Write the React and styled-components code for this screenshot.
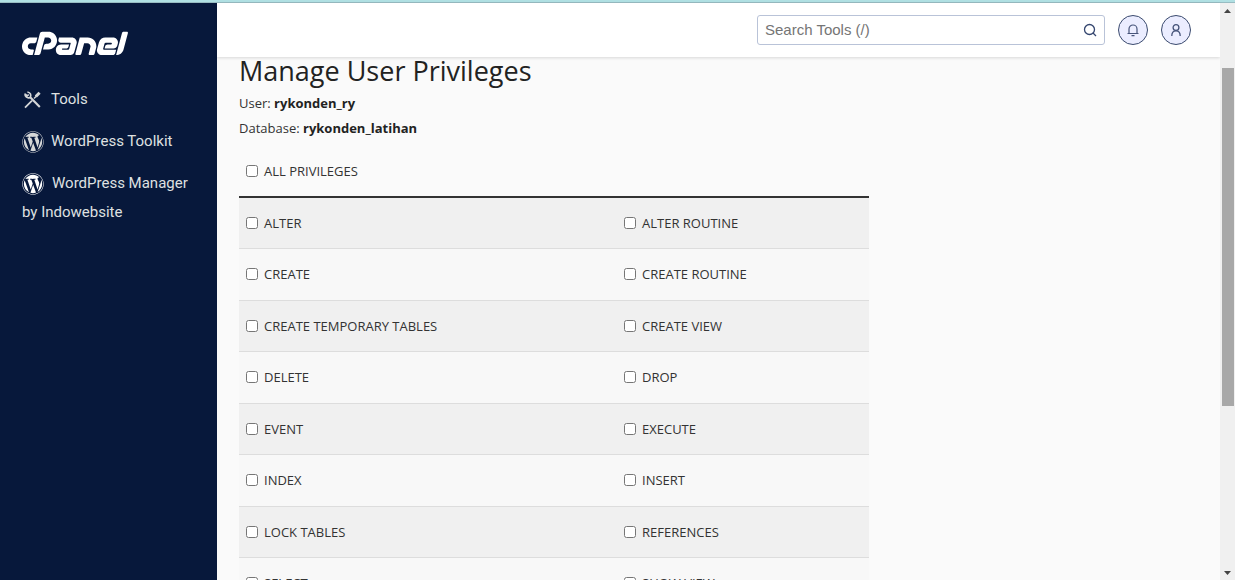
import React from 'react';
import styled, { createGlobalStyle } from 'styled-components';
import { FaCpanel, FaWordpress } from 'react-icons/fa';

const GlobalStyle = createGlobalStyle`
  *, *::before, *::after { box-sizing: border-box; }
  body {
    margin: 0;
    background: #fafafa;
    color: #333;
    font: 13px/20px "Open Sans", "Liberation Sans", sans-serif;
  }
`;

const Page = styled.div`
  display: flex;
  flex-direction: column;
  height: 100vh;
  overflow: hidden;
`;

const TopStrip = styled.div`
  flex: none;
  height: 3px;
  background: #b0e0e3;
  border-bottom: 1px solid #98bcc2;
`;

const Shell = styled.div`
  flex: 1;
  display: flex;
  min-height: 0;
`;

const Sidebar = styled.aside`
  flex: none;
  width: 217px;
  padding: 29px 22px;
  background: #07183b;
  color: #dfe0e1;
  font: 15px/29px Roboto, "Liberation Sans", sans-serif;
`;

const Logo = styled.a`
  display: flex;
  align-items: center;
  height: 24px;
  color: #fff;
  svg { width: 106px; height: 85px; }
`;

const NavList = styled.ul`
  display: flex;
  flex-direction: column;
  gap: 13px;
  margin: 29px 0 0;
  padding: 0;
  list-style: none;
`;

const NavLink = styled.a`
  display: block;
  color: inherit;
  text-decoration: none;
  svg {
    width: 22px;
    height: 22px;
    margin-right: ${(p) => (p.$wide ? 8 : 7)}px;
    vertical-align: middle;
    color: ${(p) => (p.$wide ? '#fff' : '#d5d7d8')};
  }
`;

const Content = styled.div`
  flex: 1;
  display: flex;
  flex-direction: column;
  min-width: 0;
`;

const Header = styled.header`
  flex: none;
  display: flex;
  align-items: center;
  justify-content: flex-end;
  gap: 13px;
  height: 54px;
  padding: 0 29px;
  background: #fff;
  box-shadow: 0 1px 3px rgba(0, 0, 0, 0.14);
`;

const SearchBox = styled.form`
  display: flex;
  align-items: center;
  width: 348px;
  height: 30px;
  padding: 0 7px;
  border: 1px solid #b9c3d8;
  border-radius: 3px;
  background: #fff;
`;

const SearchInput = styled.input`
  flex: 1;
  min-width: 0;
  padding: 0;
  border: 0;
  outline: 0;
  background: none;
  font: 15px/20px "Liberation Sans", sans-serif;
  &::placeholder { color: #757575; opacity: 1; }
`;

const SearchButton = styled.button`
  display: flex;
  padding: 0;
  border: 0;
  background: none;
  color: #34466f;
`;

const RoundButton = styled.button`
  display: flex;
  align-items: center;
  justify-content: center;
  width: 30px;
  height: 30px;
  padding: 0;
  border: 1px solid #3a4a6e;
  border-radius: 50%;
  background: #ebedff;
  color: #46547a;
`;

const Main = styled.main`
  flex: 1;
  min-height: 0;
  padding: 0 22px;
`;

const Title = styled.h1`
  margin: 0;
  color: #222;
  font-size: 27px;
  font-weight: 400;
  line-height: 27px;
`;

const Detail = styled.p`
  margin: 9px 0 0;
  line-height: 20px;
  & + & { margin-top: 5px; }
  strong { color: #222; }
`;

const Table = styled.table`
  width: 100%;
  max-width: 630px;
  margin-top: 8px;
  border-spacing: 0;
  table-layout: fixed;
`;

const AllCell = styled.th`
  height: 50px;
  padding: 0 7px;
  font-weight: 400;
  text-align: left;
`;

const Row = styled.tr`
  background: #f8f8f8;
  &:nth-child(odd) { background: #f0f0f0; }
`;

const Cell = styled.td`
  height: 52px;
  padding: 15px 7px 0;
  border-top: 1px solid #ddd;
  vertical-align: top;
  ${Row}:nth-child(odd) & { height: 51px; }
  ${Row}:first-child & { height: 52px; border-top: 2px solid #333; }
`;

const WideCol = styled.col`
  width: 60%;
`;

const Option = styled.label`
  display: flex;
  align-items: center;
  gap: 6px;
  input { width: 12px; height: 12px; margin: 0; }
`;

const ScrollBar = styled.div`
  flex: none;
  display: flex;
  flex-direction: column;
  align-items: center;
  width: 15px;
  background: #f0f0f0;
`;

const ScrollArrow = styled.button`
  flex: none;
  display: flex;
  align-items: center;
  justify-content: center;
  width: 15px;
  height: 15px;
  padding: 0;
  border: 0;
  background: none;
  color: #444;
`;

const Track = styled.div`
  flex: 1;
  width: 12px;
  padding-top: 50px;
`;

const Thumb = styled.div`
  height: 68%;
  background: #a8a8a8;
`;

const ToolsIcon = () => (
  <svg viewBox="0 0 22 22" fill="none" stroke="currentColor" strokeWidth="1.6" aria-hidden="true">
    <path d="M8.200 8.200 L17.800 18" strokeWidth="2.100" />
    <path d="M3 18.600 L10 11.600" strokeWidth="1.800" />
    <path d="M12 9.500 L14.500 7" strokeWidth="1.400" />
    <path d="M13.800 7.500 L17.600 3.700" strokeWidth="3" />
    <path d="M3 4.500 C2.600 8 5.400 9.600 8 8.400 C9.600 6.400 8.800 3.600 5.400 3 M3 4.800 L5.200 6.800 L6.800 5.600" />
  </svg>
);

const SearchIcon = () => (
  <svg width="14" height="14" viewBox="0 0 14 14" fill="none" stroke="currentColor" strokeWidth="1.3" aria-hidden="true">
    <circle cx="6.500" cy="6.500" r="5" />
    <path d="M10 10 L13 13" />
  </svg>
);

const BellIcon = () => (
  <svg width="14" height="14" viewBox="0 0 14 14" fill="none" stroke="currentColor" strokeWidth="1.2" aria-hidden="true">
    <path d="M1.500 10.500 H12.500 M3 10.500 V6 A4 4 0 0 1 11 6 V10.500 M5.500 12.600 H8.500" />
  </svg>
);

const UserIcon = () => (
  <svg width="14" height="14" viewBox="0 0 14 14" fill="none" stroke="currentColor" strokeWidth="1.3" aria-hidden="true">
    <circle cx="7" cy="4.500" r="2.900" />
    <path d="M2.800 13 C2.800 6.200 11.200 6.200 11.200 13" />
  </svg>
);

const Arrow = ({ down }) => (
  <svg width="7" height="4" viewBox="0 0 7 4" fill="currentColor" aria-hidden="true">
    <path d={down ? 'M0 0 H7 L3.500 4 Z' : 'M0 4 H7 L3.500 0 Z'} />
  </svg>
);

const PRIVILEGES = [
  ['ALTER', 'ALTER ROUTINE'],
  ['CREATE', 'CREATE ROUTINE'],
  ['CREATE TEMPORARY TABLES', 'CREATE VIEW'],
  ['DELETE', 'DROP'],
  ['EVENT', 'EXECUTE'],
  ['INDEX', 'INSERT'],
  ['LOCK TABLES', 'REFERENCES'],
  ['SELECT', 'SHOW VIEW'],
];

const Privilege = ({ name }) => (
  <Option>
    <input type="checkbox" name="privileges" value={name} />
    {name}
  </Option>
);

export default function App() {
  return (
    <Page>
      <GlobalStyle />
      <TopStrip />
      <Shell>
        <Sidebar>
          <Logo href="#home" aria-label="cPanel"><FaCpanel /></Logo>
          <nav>
            <NavList>
              <li><NavLink href="#tools"><ToolsIcon />Tools</NavLink></li>
              <li><NavLink href="#toolkit"><FaWordpress />WordPress Toolkit</NavLink></li>
              <li><NavLink href="#manager" $wide><FaWordpress />WordPress Manager by Indowebsite</NavLink></li>
            </NavList>
          </nav>
        </Sidebar>
        <Content>
          <Header>
            <SearchBox role="search">
              <SearchInput type="text" placeholder="Search Tools (/)" aria-label="Search Tools" />
              <SearchButton type="button" aria-label="Search"><SearchIcon /></SearchButton>
            </SearchBox>
            <RoundButton type="button" aria-label="Notifications"><BellIcon /></RoundButton>
            <RoundButton type="button" aria-label="Account"><UserIcon /></RoundButton>
          </Header>
          <Main>
            <Title>Manage User Privileges</Title>
            <Detail>User: <strong>rykonden_ry</strong></Detail>
            <Detail>Database: <strong>rykonden_latihan</strong></Detail>
            <Table>
              <colgroup>
                <WideCol />
                <col />
              </colgroup>
              <thead>
                <tr><AllCell colSpan={2}><Privilege name="ALL PRIVILEGES" /></AllCell></tr>
              </thead>
              <tbody>
                {PRIVILEGES.map(([left, right]) => (
                  <Row key={left}>
                    <Cell><Privilege name={left} /></Cell>
                    <Cell><Privilege name={right} /></Cell>
                  </Row>
                ))}
              </tbody>
            </Table>
          </Main>
        </Content>
        <ScrollBar>
          <ScrollArrow type="button" aria-label="Scroll up"><Arrow /></ScrollArrow>
          <Track><Thumb /></Track>
          <ScrollArrow type="button" aria-label="Scroll down"><Arrow down /></ScrollArrow>
        </ScrollBar>
      </Shell>
    </Page>
  );
}
